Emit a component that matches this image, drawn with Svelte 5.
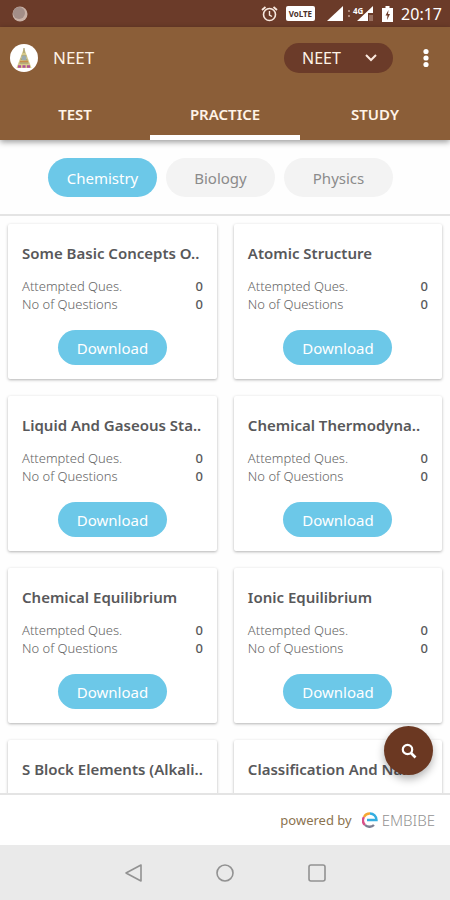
<script>
    const tabs = ['TEST', 'PRACTICE', 'STUDY'];
    const subjects = ['Chemistry', 'Biology', 'Physics'];
    const chapters = [
        'Some Basic Concepts O..',
        'Atomic Structure',
        'Liquid And Gaseous Sta..',
        'Chemical Thermodyna..',
        'Chemical Equilibrium',
        'Ionic Equilibrium',
        'S Block Elements (Alkali..',
        'Classification And Na..'
    ];

    let activeTab = $state('PRACTICE');
    let subject = $state('Chemistry');
    let exam = $state('NEET');
</script>

<div class="app">
    <div class="status">
        <svg class="dot" width="16" height="16" viewBox="0 0 16 16" aria-hidden="true">
            <circle cx="8" cy="8" r="7.5" fill="#c9b1a6" />
            <circle cx="7" cy="7" r="6" fill="#a38e88" />
        </svg>
        <svg width="17" height="18" viewBox="0 0 17 18" fill="none" stroke="#f8e9df" aria-hidden="true">
            <circle cx="8.5" cy="9.5" r="6" stroke-width="1.6" />
            <path d="M8.5 6v4l2.5 1.5" stroke-width="1.4" />
            <path d="M1 5l3.5-3M16 5l-3.5-3" stroke-width="1.8" />
        </svg>
        <span class="volte">VoLTE</span>
        <svg class="signal" width="16" height="16" viewBox="0 0 16 16" aria-hidden="true">
            <path d="M16 0v15H0z" fill="#fff" />
        </svg>
        <svg class="signal-4g" width="25" height="16" viewBox="0 0 25 16" aria-hidden="true">
            <path d="M1 4v2M1 9v2" stroke="#b08a7a" stroke-width="2" />
            <path d="M25 0v7h-5v8H9z" fill="#fff" />
            <path d="M22 9v6M24 9v6" stroke="#c7a79a" />
            <text x="5" y="8" fill="#fff" font-size="8" font-weight="700">4G</text>
        </svg>
        <svg class="battery" width="11" height="16" viewBox="0 0 11 16" aria-hidden="true">
            <path d="M3.5 0h4v2H11v14H0V2h3.5z" fill="#fff" />
            <path d="M6.5 4L3.5 9.5h2L5 14l3-6H6z" fill="#6b3b29" />
        </svg>
        <span class="time">20:17</span>
    </div>

    <header>
        <div class="bar">
            <svg class="logo" width="28" height="28" viewBox="0 0 28 28" aria-hidden="true">
                <circle cx="14" cy="14" r="14" fill="#fff" />
                <path d="M14 4l7.5 20h-15z" fill="#d6c98a" />
                <path d="M14 4v5M11.5 12h5M10.5 15l7 1M9.5 19h9" stroke="#958f66" />
                <circle cx="14" cy="14" r="2.5" fill="#9aabb0" />
                <path d="M10 17.5h8" stroke="#c98b4b" stroke-width="1.5" />
                <path d="M8 22.5h12" stroke="#b04f96" stroke-width="2.5" stroke-dasharray="3 1.5" />
            </svg>
            <h1>NEET</h1>
            <div class="exam">
                <select aria-label="Exam" bind:value={exam}>
                    <option>NEET</option>
                </select>
                <svg width="12" height="8" viewBox="0 0 12 8" fill="none" stroke="#fbe9df" stroke-width="2" aria-hidden="true">
                    <path d="M1 1l5 5 5-5" />
                </svg>
            </div>
            <button class="more" aria-label="More options">
                <svg width="6" height="20" viewBox="0 0 6 20" fill="#fff" aria-hidden="true">
                    <circle cx="3" cy="3.5" r="2.6" />
                    <circle cx="3" cy="10" r="2.6" />
                    <circle cx="3" cy="16.5" r="2.6" />
                </svg>
            </button>
        </div>
        <nav class="tabs">
            {#each tabs as tab (tab)}
            <button class:active={activeTab === tab} onclick={() => activeTab = tab}>{tab}</button>
            {/each}
        </nav>
    </header>

    <div class="subjects">
        {#each subjects as name (name)}
        <button class="pill" class:selected={subject === name} onclick={() => subject = name}>{name}</button>
        {/each}
    </div>

    <main>
        <div class="grid">
            {#each chapters as chapter (chapter)}
            <article>
                <h2>{chapter}</h2>
                <dl>
                    <dt>Attempted Ques.</dt>
                    <dd>0</dd>
                    <dt>No of Questions</dt>
                    <dd>0</dd>
                </dl>
                <button class="download">Download</button>
            </article>
            {/each}
        </div>
        <button class="search" aria-label="Search">
            <svg width="16" height="16" viewBox="0 0 16 16" fill="none" stroke="#fff" aria-hidden="true">
                <circle cx="6.5" cy="6.5" r="4.7" stroke-width="2.2" />
                <path d="M10 10l4.5 4.5" stroke-width="2.6" />
            </svg>
        </button>
    </main>

    <footer>
        <span class="powered">powered by</span>
        <svg width="16" height="16" viewBox="0 0 16 16" fill="none" stroke-width="2.4" aria-hidden="true">
            <path d="M3 13A6.5 6.5 0 0 1 2 5" stroke="#d9508a" />
            <path d="M2 5A6.5 6.5 0 0 1 8 1.5" stroke="#f5a834" />
            <path d="M8 1.5A6.5 6.5 0 0 1 14.5 8H5" stroke="#35aee0" />
            <path d="M3 13a6.5 6.5 0 0 0 9 0" stroke="#7d7f92" />
        </svg>
        <span class="brand">EMBIBE</span>
    </footer>

    <div class="system">
        <button aria-label="Back">
            <svg width="20" height="20" viewBox="0 0 20 20" aria-hidden="true">
                <path d="M18 2v16L3 10z" />
            </svg>
        </button>
        <button aria-label="Home">
            <svg width="20" height="20" viewBox="0 0 20 20" aria-hidden="true">
                <circle cx="10" cy="10" r="8" />
            </svg>
        </button>
        <button aria-label="Recent apps">
            <svg width="20" height="20" viewBox="0 0 20 20" aria-hidden="true">
                <rect x="2" y="2" width="16" height="16" rx="2" />
            </svg>
        </button>
    </div>
</div>

<style>
    :global(body) {
        margin: 0;
    }

    .app {
        display: flex;
        flex-direction: column;
        height: 100vh;
        background-color: #fefefe;
        color: #58585a;
        font-family: 'Noto Sans', sans-serif;
    }

    button, select {
        border: none;
        padding: 0;
        background: none;
        color: inherit;
        font-family: inherit;
        cursor: pointer;
    }

    svg {
        display: block;
        flex: none;
    }

    .status {
        display: flex;
        align-items: center;
        height: 27px;
        padding: 0 8px 0 12px;
        background-color: #6b3b29;
        color: #fff;
    }

    .dot {
        margin-right: auto;
    }

    .volte {
        margin: 0 12px 0 8px;
        padding: 0 3px;
        border-radius: 2px;
        background-color: #fff;
        color: #4a3028;
        font-size: 8px;
        font-weight: 700;
        line-height: 15px;
    }

    .signal-4g {
        margin: 0 9px 0 5px;
        overflow: visible;
    }

    .time {
        margin-left: 8px;
        font-size: 16px;
        line-height: 24px;
    }

    header {
        position: relative;
        z-index: 1;
        background-color: #8b5e38;
        box-shadow: 0 2px 6px rgba(0, 0, 0, 0.4);
        color: #fff3e6;
    }

    .bar {
        display: flex;
        align-items: center;
        height: 61px;
        padding: 0 10px;
    }

    h1 {
        margin: 0 auto 0 15px;
        font-size: 17px;
        font-weight: 400;
    }

    .exam {
        display: grid;
        align-items: center;
        width: 109px;
        height: 30px;
        border-radius: 15px;
        background-color: #6b3b29;
    }

    .exam select, .exam svg {
        grid-area: 1 / 1;
    }

    .exam select {
        height: 30px;
        padding: 0 18px;
        appearance: none;
        font-size: 16px;
    }

    .exam svg {
        justify-self: end;
        margin-right: 16px;
        pointer-events: none;
    }

    .more {
        display: grid;
        place-items: center;
        width: 28px;
        height: 32px;
        margin-left: 19px;
    }

    .tabs {
        display: grid;
        grid-template-columns: repeat(3, 1fr);
    }

    .tabs button {
        height: 52px;
        border-top: 5px solid transparent;
        border-bottom: 5px solid transparent;
        font-size: 15px;
        font-weight: 600;
    }

    .tabs .active {
        border-bottom-color: #fff;
    }

    .subjects {
        display: flex;
        justify-content: center;
        padding: 18px 0 17px;
        border-bottom: 2px solid #e4e4e4;
    }

    .pill, .download {
        width: 109px;
        border-radius: 20px;
        font-size: 15px;
    }

    .pill {
        height: 39px;
        margin-right: 9px;
        background-color: #f3f3f3;
        color: #8b8b8b;
    }

    .pill.selected, .download {
        background-color: #6cc8e8;
        color: #fff;
    }

    main {
        position: relative;
        flex: 1;
        min-height: 0;
    }

    .grid {
        display: grid;
        grid-template-columns: 1fr 1fr;
        gap: 17px;
        height: 100%;
        box-sizing: border-box;
        padding: 8px 8px 0;
        overflow-y: auto;
        scrollbar-width: none;
    }

    article {
        display: flex;
        flex-direction: column;
        height: 155px;
        box-sizing: border-box;
        padding: 17px 14px 14px;
        border-radius: 2px;
        background-color: #fff;
        box-shadow: 0 1px 3px rgba(0, 0, 0, 0.3);
    }

    h2 {
        margin: 0 0 12px;
        font-size: 15px;
        font-weight: 600;
        line-height: 24px;
        white-space: nowrap;
    }

    dl {
        display: grid;
        grid-template-columns: 1fr auto;
        margin: 0;
        font-size: 13px;
        line-height: 18px;
    }

    dt {
        color: #666;
        font-weight: 300;
    }

    dd {
        margin: 0;
        font-weight: 500;
    }

    .download {
        align-self: center;
        height: 35px;
        margin-top: auto;
    }

    .search {
        position: absolute;
        right: 17px;
        bottom: 18px;
        display: grid;
        place-items: center;
        width: 49px;
        height: 49px;
        border-radius: 50%;
        background-color: #6b3822;
        box-shadow: 0 4px 8px rgba(0, 0, 0, 0.3);
    }

    footer {
        position: relative;
        display: flex;
        align-items: center;
        justify-content: flex-end;
        height: 50px;
        padding-right: 15px;
        border-top: 2px solid #e4e4e4;
        background-color: #fff;
    }

    .powered {
        margin-right: 10px;
        color: #8a7350;
        font-size: 13px;
    }

    .brand {
        margin-left: 4px;
        color: #929292;
        font-size: 15px;
        font-weight: 300;
    }

    .system {
        display: flex;
        align-items: center;
        justify-content: center;
        gap: 72px;
        height: 55px;
        background-color: #eaeaea;
    }

    .system svg {
        fill: none;
        stroke: #929292;
        stroke-width: 1.6;
        stroke-linejoin: round;
    }
</style>
